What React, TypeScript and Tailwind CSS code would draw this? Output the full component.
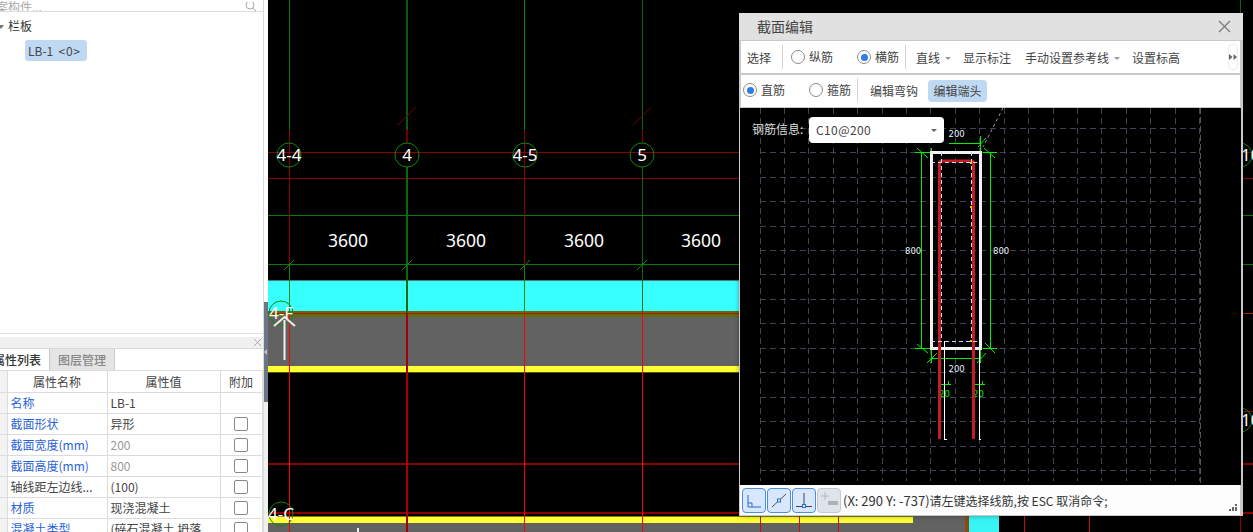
import React from "react";

const XS = [289, 407, 525, 642];
const GX = Array.from({ length: 19 }, (_, i) => 760 + i * 24.42);
const GY = Array.from({ length: 15 }, (_, i) => 128.3 + i * 24.44);

const rows: [string, string, boolean, boolean, boolean][] = [
  ["名称", "LB-1", true, false, false],
  ["截面形状", "异形", true, false, true],
  ["截面宽度(mm)", "200", true, true, true],
  ["截面高度(mm)", "800", true, true, true],
  ["轴线距左边线...", "(100)", false, false, true],
  ["材质", "现浇混凝土", true, false, true],
  ["混凝土类型", "(碎石混凝土 坍落", true, false, true],
];

function Radio({ on }: { on?: boolean }) {
  return (
    <span className="w-[14px] h-[14px] rounded-full border border-[#8a8a8a] bg-white flex items-center justify-center shrink-0">
      {on && <span className="w-[7px] h-[7px] rounded-full bg-[#2b7de9]" />}
    </span>
  );
}

function Caret() {
  return <span className="w-0 h-0 border-x-[3px] border-x-transparent border-t-[3px] border-t-[#999] shrink-0" />;
}

function Divider() {
  return <span className="w-px h-[24px] bg-[#d6d6d6] shrink-0" />;
}

function Tool({ children, off }: { children: React.ReactNode; off?: boolean }) {
  return (
    <span
      className={
        off
          ? "w-[24px] h-[25px] rounded-[4px] border border-[#c2c8d2] bg-[#dfe3ea] shrink-0"
          : "w-[24px] h-[25px] rounded-[4px] border border-[#4a90e2] bg-[#d8e7fb] shrink-0"
      }
    >
      <svg width="22" height="23" viewBox="0 0 22 23" className="block">
        {children}
      </svg>
    </span>
  );
}

function Plan() {
  return (
    <svg viewBox="268 0 985 532" className="block w-[985px] h-[532px] shrink-0" fontFamily="'Noto Sans', sans-serif">
      <rect x="268" y="0" width="985" height="532" fill="#000" />
      {/* bands */}
      <rect x="268" y="281" width="480" height="30" fill="#38ffff" />
      <rect x="268" y="280" width="480" height="1" fill="#4a7a7a" />
      <rect x="268" y="311" width="480" height="6" fill="#66690f" />
      <rect x="268" y="317" width="480" height="49" fill="#626262" />
      <rect x="268" y="366" width="480" height="6" fill="#ffff33" />
      <rect x="268" y="372" width="480" height="1" fill="#55550f" />
      <rect x="268" y="523" width="700" height="9" fill="#626262" />
      <rect x="268" y="516.5" width="645" height="6.5" fill="#ffff33" />
      <rect x="913" y="516" width="52" height="7" fill="#626262" />
      <rect x="965" y="516" width="4" height="16" fill="#8a4a10" />
      <rect x="969" y="516" width="30" height="16" fill="#38f4f4" />
      {/* horizontals */}
      <g shapeRendering="crispEdges">
        <line x1="268" x2="1253" y1="152.5" y2="152.5" stroke="#8a0000" />
        <line x1="268" x2="1253" y1="178.5" y2="178.5" stroke="#8a0000" />
        <line x1="268" x2="1253" y1="215.5" y2="215.5" stroke="#0b7a0b" />
        <line x1="268" x2="1253" y1="264.5" y2="264.5" stroke="#0b7a0b" />
        <line x1="268" x2="748" y1="313.5" y2="313.5" stroke="#b01a00" />
        <line x1="1243" x2="1253" y1="313.5" y2="313.5" stroke="#b01a00" />
        <line x1="268" x2="1253" y1="463.5" y2="463.5" stroke="#8a0000" strokeWidth="2" />
        <line x1="268" x2="1253" y1="513" y2="513" stroke="#8a0000" strokeWidth="2" />
        <line x1="1243" x2="1253" y1="411.5" y2="411.5" stroke="#8a0000" />
        {/* verticals above */}
        <line x1="289.5" x2="289.5" y1="0" y2="130" stroke="#0a7a0a" />
        <line x1="407" x2="407" y1="0" y2="130" stroke="#0a5a0a" strokeWidth="2" />
        <line x1="524.5" x2="524.5" y1="0" y2="130" stroke="#0a8a0a" />
        <line x1="642.5" x2="642.5" y1="0" y2="130" stroke="#0a6a0a" />
        <line x1="289.5" x2="289.5" y1="130" y2="265" stroke="#8a0000" />
        <line x1="407" x2="407" y1="130" y2="143" stroke="#700000" strokeWidth="2" />
        <line x1="407" x2="407" y1="167" y2="313" stroke="#0a6a0a" strokeWidth="2" />
        <line x1="524.5" x2="524.5" y1="130" y2="265" stroke="#8a0000" />
        <line x1="642.5" x2="642.5" y1="130" y2="143" stroke="#8a0000" />
        <line x1="642.5" x2="642.5" y1="167" y2="313" stroke="#0a6a0a" />
        <line x1="289.5" x2="289.5" y1="265" y2="313" stroke="#0a8a0a" />
        <line x1="524.5" x2="524.5" y1="265" y2="313" stroke="#0a8a0a" />
        {/* verticals below */}
        <line x1="289.5" x2="289.5" y1="313" y2="532" stroke="#ff0000" />
        <line x1="407" x2="407" y1="313" y2="532" stroke="#a80000" strokeWidth="2" />
        <line x1="524.5" x2="524.5" y1="313" y2="532" stroke="#ff0000" />
        <line x1="642.5" x2="642.5" y1="313" y2="532" stroke="#ff0000" />
        <line x1="760.5" x2="760.5" y1="516" y2="532" stroke="#c01010" />
        <line x1="799" x2="799" y1="516" y2="532" stroke="#c01010" />
        <line x1="838" x2="838" y1="516" y2="532" stroke="#c01010" />
        <line x1="1024.5" x2="1024.5" y1="516" y2="532" stroke="#c01010" />
        <line x1="1089.5" x2="1089.5" y1="516" y2="532" stroke="#c01010" />
        <line x1="1240.5" x2="1240.5" y1="0" y2="14" stroke="#0a6a0a" />
        <line x1="1240.5" x2="1240.5" y1="516" y2="532" stroke="#8a0000" />
      </g>
      {/* slashes */}
      <line x1="398" y1="125" x2="416" y2="107" stroke="#7a0000" />
      <line x1="633" y1="125" x2="651.5" y2="107" stroke="#7a0000" />
      {XS.map((x) => (
        <line key={x} x1={x - 5} y1="270" x2={x + 5} y2="260" stroke="#0a8a0a" />
      ))}
      {/* axis bubbles */}
      {[
        [289, 155, "4-4"],
        [407, 155, "4"],
        [525, 155, "4-5"],
        [642, 155, "5"],
        [281, 313, "4-F"],
        [281, 514, "4-C"],
        [1240, 155, "10"],
        [1240, 420, "10"],
      ].map(([x, y, t]) => (
        <g key={`${x}-${y}`}>
          <circle cx={x as number} cy={y as number} r="12" fill="none" stroke="#0a8a0a" />
          <text x={x as number} y={(y as number) + 6} textAnchor={(x as number) > 1000 ? "start" : "middle"} dx={(x as number) > 1000 ? 1 : 0} fontSize="17" fill="#fff">
            {t as string}
          </text>
        </g>
      ))}
      {[348, 466, 584, 701].map((x) => (
        <text key={x} x={x} y="247" textAnchor="middle" fontSize="17.5" fill="#fff">
          3600
        </text>
      ))}
      {/* origin arrow */}
      <line x1="284.5" y1="320" x2="284.5" y2="360" stroke="#eee" strokeWidth="2" />
      <path d="M274 326 L284.5 317 L295 326" fill="none" stroke="#eee" strokeWidth="2" />
      <rect x="357" y="528" width="2" height="4" fill="#eee" />
    </svg>
  );
}

function Section() {
  const g = "#00f000";
  return (
    <svg viewBox="740 108 501 377" className="absolute inset-0 w-[501px] h-[377px]" fontFamily="'DejaVu Sans', sans-serif">
      <rect x="740" y="108" width="501" height="377" fill="#000" />
      {GY.map((y) => (
        <line key={y} x1="760" x2="1200" y1={y} y2={y} stroke="#3d4452" strokeDasharray="6 4" shapeRendering="crispEdges" />
      ))}
      {GX.map((x) => (
        <line key={x} x1={x} x2={x} y1="108" y2="481" stroke="#3d4452" strokeDasharray="6 4" shapeRendering="crispEdges" />
      ))}
      <line x1="1200.5" x2="1200.5" y1="108" y2="484" stroke="#555" strokeDasharray="6 3" shapeRendering="crispEdges" />
      <line x1="1003" y1="108" x2="983" y2="147" stroke="#999" strokeDasharray="3 3" />
      {/* green dimensions */}
      <g stroke={g} fill="none" shapeRendering="crispEdges">
        <path d="M921.5 152V348M990.5 152V348M915 152.5H930M983 152.5H997M915 348.5H930M983 348.5H997" />
        <path d="M949 143.5H981M980.5 136V152M931.5 148V152M931.5 348V363M980.5 348V363M931 358.5H980" />
        <path d="M940.5 381V388M940 384.5H951M948.5 381V384M974.5 381V388M974 384.5H985M982.5 381V384" />
      </g>
      <g stroke={g} fill="none">
        <path d="M917 148L928 158M984 148L995 158M917 344L928 353M985 343L995 353M978 147L986 138M927 363L937 353M977 363L986 353" />
      </g>
      <text x="948.5" y="137" fontSize="8.5" fill="#e8f0ff">200</text>
      <text x="948.5" y="372" fontSize="8.5" fill="#e8f0ff">200</text>
      <text x="905" y="254" fontSize="8.5" fill="#e8f0ff">800</text>
      <text x="993" y="254" fontSize="8.5" fill="#e8f0ff">800</text>
      <text x="939" y="397" fontSize="8.5" fill={g}>20</text>
      <text x="973" y="397" fontSize="8.5" fill={g}>20</text>
      {/* outline */}
      <path d="M931.5 350V152.5H980.5V348M930 348.5H982" fill="none" stroke="#f2f2f2" strokeWidth="3" shapeRendering="crispEdges" />
      <path d="M939.5 439V163Q939.5 161 941.5 161H971.5Q973.5 161 973.5 163V439" fill="none" stroke="#c21d22" strokeWidth="3" />
      <path d="M931 162.5H981M941.5 152V341M971.5 152V341M931 341.5H980" fill="none" stroke="#c8d8f0" strokeDasharray="4 3" shapeRendering="crispEdges" />
      <path d="M944.5 341V439H947M979.5 348V439H981" fill="none" stroke="#fff" shapeRendering="crispEdges" />
      <rect x="970" y="162" width="2" height="2" fill="#f5c518" />
      <rect x="970" y="206" width="2" height="2" fill="#f5c518" />
      <rect x="970" y="340" width="2" height="2" fill="#f5c518" />
    </svg>
  );
}

function Dialog() {
  const t = "text-[12px] leading-none text-[#444] shrink-0";
  return (
    <div className="absolute left-[739px] top-[13px] w-[504px] h-[503px] bg-[#c8c9cc] flex flex-col pr-[2px] pb-px shadow-[0_0_5px_rgba(0,0,0,0.35)]">
      <div className="h-[27px] bg-[#e1e1e1] -mr-[2px] flex items-center justify-between pl-[18px] pr-[12px] shrink-0">
        <span className="text-[14px] text-[#444]">截面编辑</span>
        <svg width="13" height="13" viewBox="0 0 13 13">
          <path d="M1 1L12 12M12 1L1 12" stroke="#777" strokeWidth="1.2" fill="none" />
        </svg>
      </div>
      <div className="h-[32px] mt-px ml-[2px] mr-px bg-white flex items-center pl-[6px] shrink-0 relative">
        <span className={`${t} mt-[2px]`}>选择</span>
        <span className="ml-[11px] flex"><Divider /></span>
        <span className="ml-[8px] flex"><Radio /></span>
        <span className={`${t} ml-[4px]`}>纵筋</span>
        <span className="ml-[24px] flex"><Radio on /></span>
        <span className={`${t} ml-[4px]`}>横筋</span>
        <span className="ml-[6px] flex"><Divider /></span>
        <span className={`${t} ml-[10px] mt-[2px]`}>直线</span>
        <span className="ml-[5px] flex mt-[2px]"><Caret /></span>
        <span className={`${t} ml-[12px] mt-[2px]`}>显示标注</span>
        <span className={`${t} ml-[14px] mt-[2px]`}>手动设置参考线</span>
        <span className="ml-[5px] flex mt-[2px]"><Caret /></span>
        <span className={`${t} ml-[12px] mt-[2px]`}>设置标高</span>
        <span className="ml-auto mr-[2px] w-[10px] h-[26px] border border-[#ececec] rounded-[4px] flex items-center justify-center">
          <svg width="8" height="6" viewBox="0 0 8 6">
            <path d="M0 0L3.5 3L0 6ZM4.5 0L8 3L4.5 6Z" fill="#666" />
          </svg>
        </span>
      </div>
      <div className="h-[32px] mt-[2px] ml-[2px] mr-px bg-white flex items-center pl-[2px] pb-[2px] shrink-0">
        <Radio on />
        <span className={`${t} ml-[4px] text-[#222]`}>直筋</span>
        <span className="ml-[24px] flex"><Radio /></span>
        <span className={`${t} ml-[4px] text-[#222]`}>箍筋</span>
        <span className="ml-[6px] flex"><Divider /></span>
        <span className={`${t} ml-[12px] mt-[2px]`}>编辑弯钩</span>
        <span className={`${t} ml-[10px] mt-[2px] h-[22px] w-[59px] rounded-[4px] bg-[#c0d9f2] flex items-center justify-center`}>编辑端头</span>
      </div>
      <div className="relative h-[377px] ml-px mr-px shrink-0 mt-px">
        <Section />
        <span className="absolute left-[12px] top-[15px] text-[12px] leading-none text-[#ddd]">钢筋信息:</span>
        <div className="absolute left-[69px] top-[9px] w-[135px] h-[26px] rounded-[4px] bg-white flex items-center justify-between px-[7px]">
          <span className="text-[12px] tracking-[0.4px] text-[#444]">C10@200</span>
          <span className="w-0 h-0 border-x-[3px] border-x-transparent border-t-[3px] border-t-[#666]" />
        </div>
      </div>
      <div className="flex-1 ml-px mr-px bg-[#fdfdfd] flex items-center gap-px pl-[2px] relative">
        <Tool>
          <path d="M5 6V18H18M5 14H9V18" fill="none" stroke="#2a6fd0" />
        </Tool>
        <Tool>
          <path d="M4 18L18 5" fill="none" stroke="#555" />
          <rect x="9.5" y="10" width="3" height="3" fill="#d8e7fb" stroke="#2a6fd0" />
        </Tool>
        <Tool>
          <path d="M11 4V16M3 17.5H19" fill="none" stroke="#444" />
          <rect x="9.5" y="15.5" width="3" height="3" fill="#d8e7fb" stroke="#2a6fd0" />
        </Tool>
        <Tool off>
          <path d="M7 3V11M3 7H11" fill="none" stroke="#b5b9c0" />
          <rect x="10" y="12" width="10" height="4" fill="#aeb2b8" />
        </Tool>
        <span className="ml-px text-[12px] leading-none text-[#333] whitespace-nowrap">
          <span className="text-[13px]">(X: 290 Y: -737)</span>请左键选择线筋,按 ESC 取消命令;
        </span>
        <svg width="8" height="7" viewBox="0 0 8 7" className="absolute right-[3px] bottom-[4px]">
          <path d="M6 0h2v2H6zM3 3h2v2H3zM6 3h2v2H6zM0 5h2v2H0zM3 5h2v2H3zM6 5h2v2H6z" fill="#666" />
        </svg>
      </div>
    </div>
  );
}

function LeftPanel() {
  const cell = "border-r border-b border-[#dcdcdc] h-[21px] p-0";
  return (
    <div className="w-[264px] shrink-0 h-[532px] flex flex-col bg-white border-r border-[#dcdcdc] overflow-hidden">
      <div className="h-[12px] shrink-0 border-b border-[#ddd] flex items-end justify-between overflow-hidden">
        <span className="-ml-[16px] text-[12px] leading-[16px] text-[#aaa] -mb-[4px]">档案构件...</span>
        <svg width="12" height="12" viewBox="0 0 12 12" className="mr-[6px] -mb-[3px] shrink-0">
          <circle cx="5" cy="3" r="4" fill="none" stroke="#aaa" />
          <path d="M8 6L11 9" stroke="#aaa" />
        </svg>
      </div>
      <div className="h-[321px] shrink-0 pt-[6px]">
        <div className="flex items-center h-[18px]">
          <span className="w-0 h-0 -ml-[2px] border-x-[3px] border-x-transparent border-t-[4px] border-t-[#777]" />
          <span className="ml-[4px] text-[12px] leading-none text-[#333] -mt-[2px]">栏板</span>
        </div>
        <div className="ml-[25px] mt-[4px] w-[62px] h-[21px] rounded-[3px] bg-[#c0d9f2] flex items-center pl-[3px]">
          <span className="text-[12px] leading-none text-[#444] whitespace-pre">
            LB-1  <span className="tracking-[0.7px]">&lt;0&gt;</span>
          </span>
        </div>
      </div>
      <div className="h-[3px] shrink-0 border-t border-[#e0e0e0] box-content" />
      <div className="h-[11px] shrink-0 box-content border-b border-[#d9d9d9] bg-[#f0f0f0] flex items-center justify-end pr-[2px]">
        <svg width="7" height="7" viewBox="0 0 7 7">
          <path d="M0 0L7 7M7 0L0 7" stroke="#aaa" />
        </svg>
      </div>
      <div className="h-[22px] shrink-0 border-b border-[#ddd] flex items-stretch overflow-hidden">
        <span className="w-[49px] shrink-0 flex items-center justify-end pr-[8px] text-[12px] font-medium text-[#333] whitespace-nowrap overflow-hidden">属性列表</span>
        <span className="w-[66px] shrink-0 bg-[#e5e5e5] border border-t-0 border-b-0 border-[#c8c8c8] flex items-center justify-center text-[12px] font-medium text-[#888]">图层管理</span>
      </div>
      <table className="table-fixed border-collapse w-[262px] text-[12px] leading-none">
        <colgroup>
          <col className="w-[7px]" />
          <col className="w-[100px]" />
          <col className="w-[113px]" />
          <col className="w-[42px]" />
        </colgroup>
        <tbody>
          <tr>
            <td className={`${cell} bg-[#f3f3f3]`} />
            <td className={`${cell} pt-[2px] text-center text-[#444]`}>属性名称</td>
            <td className={`${cell} pt-[2px] text-center text-[#444]`}>属性值</td>
            <td className={`${cell} pt-[2px] text-center text-[#444]`}>附加</td>
          </tr>
          {rows.map(([n, v, blue, grey, check]) => (
            <tr key={n}>
              <td className={`${cell} bg-[#f3f3f3]`} />
              <td className={`${cell} pl-[3px] whitespace-nowrap overflow-hidden ${blue ? "text-[#2a62d9]" : "text-[#444]"}`}>{n}</td>
              <td className={`${cell} pl-[3px] whitespace-nowrap overflow-hidden ${grey ? "text-[#999]" : "text-[#444]"}`}>{v}</td>
              <td className={cell}>
                {check && <span className="block mx-auto w-[14px] h-[14px] rounded-[2px] border border-[#888] bg-white" />}
              </td>
            </tr>
          ))}
        </tbody>
      </table>
    </div>
  );
}

export default function App() {
  return (
    <div className="relative w-[1253px] h-[532px] overflow-hidden flex bg-black font-['Noto_Sans_CJK_SC','Noto_Sans',sans-serif]">
      <LeftPanel />
      <div className="w-[4px] shrink-0 flex flex-col">
        <div className="h-[302px] bg-white" />
        <div className="h-[100px] bg-[#6d7684] flex items-center">
          <span className="w-0 h-0 border-y-[3px] border-y-transparent border-r-[3px] border-r-[#c5c9d0]" />
        </div>
        <div className="flex-1 bg-[#f0f0f0]" />
      </div>
      <Plan />
      <Dialog />
    </div>
  );
}
